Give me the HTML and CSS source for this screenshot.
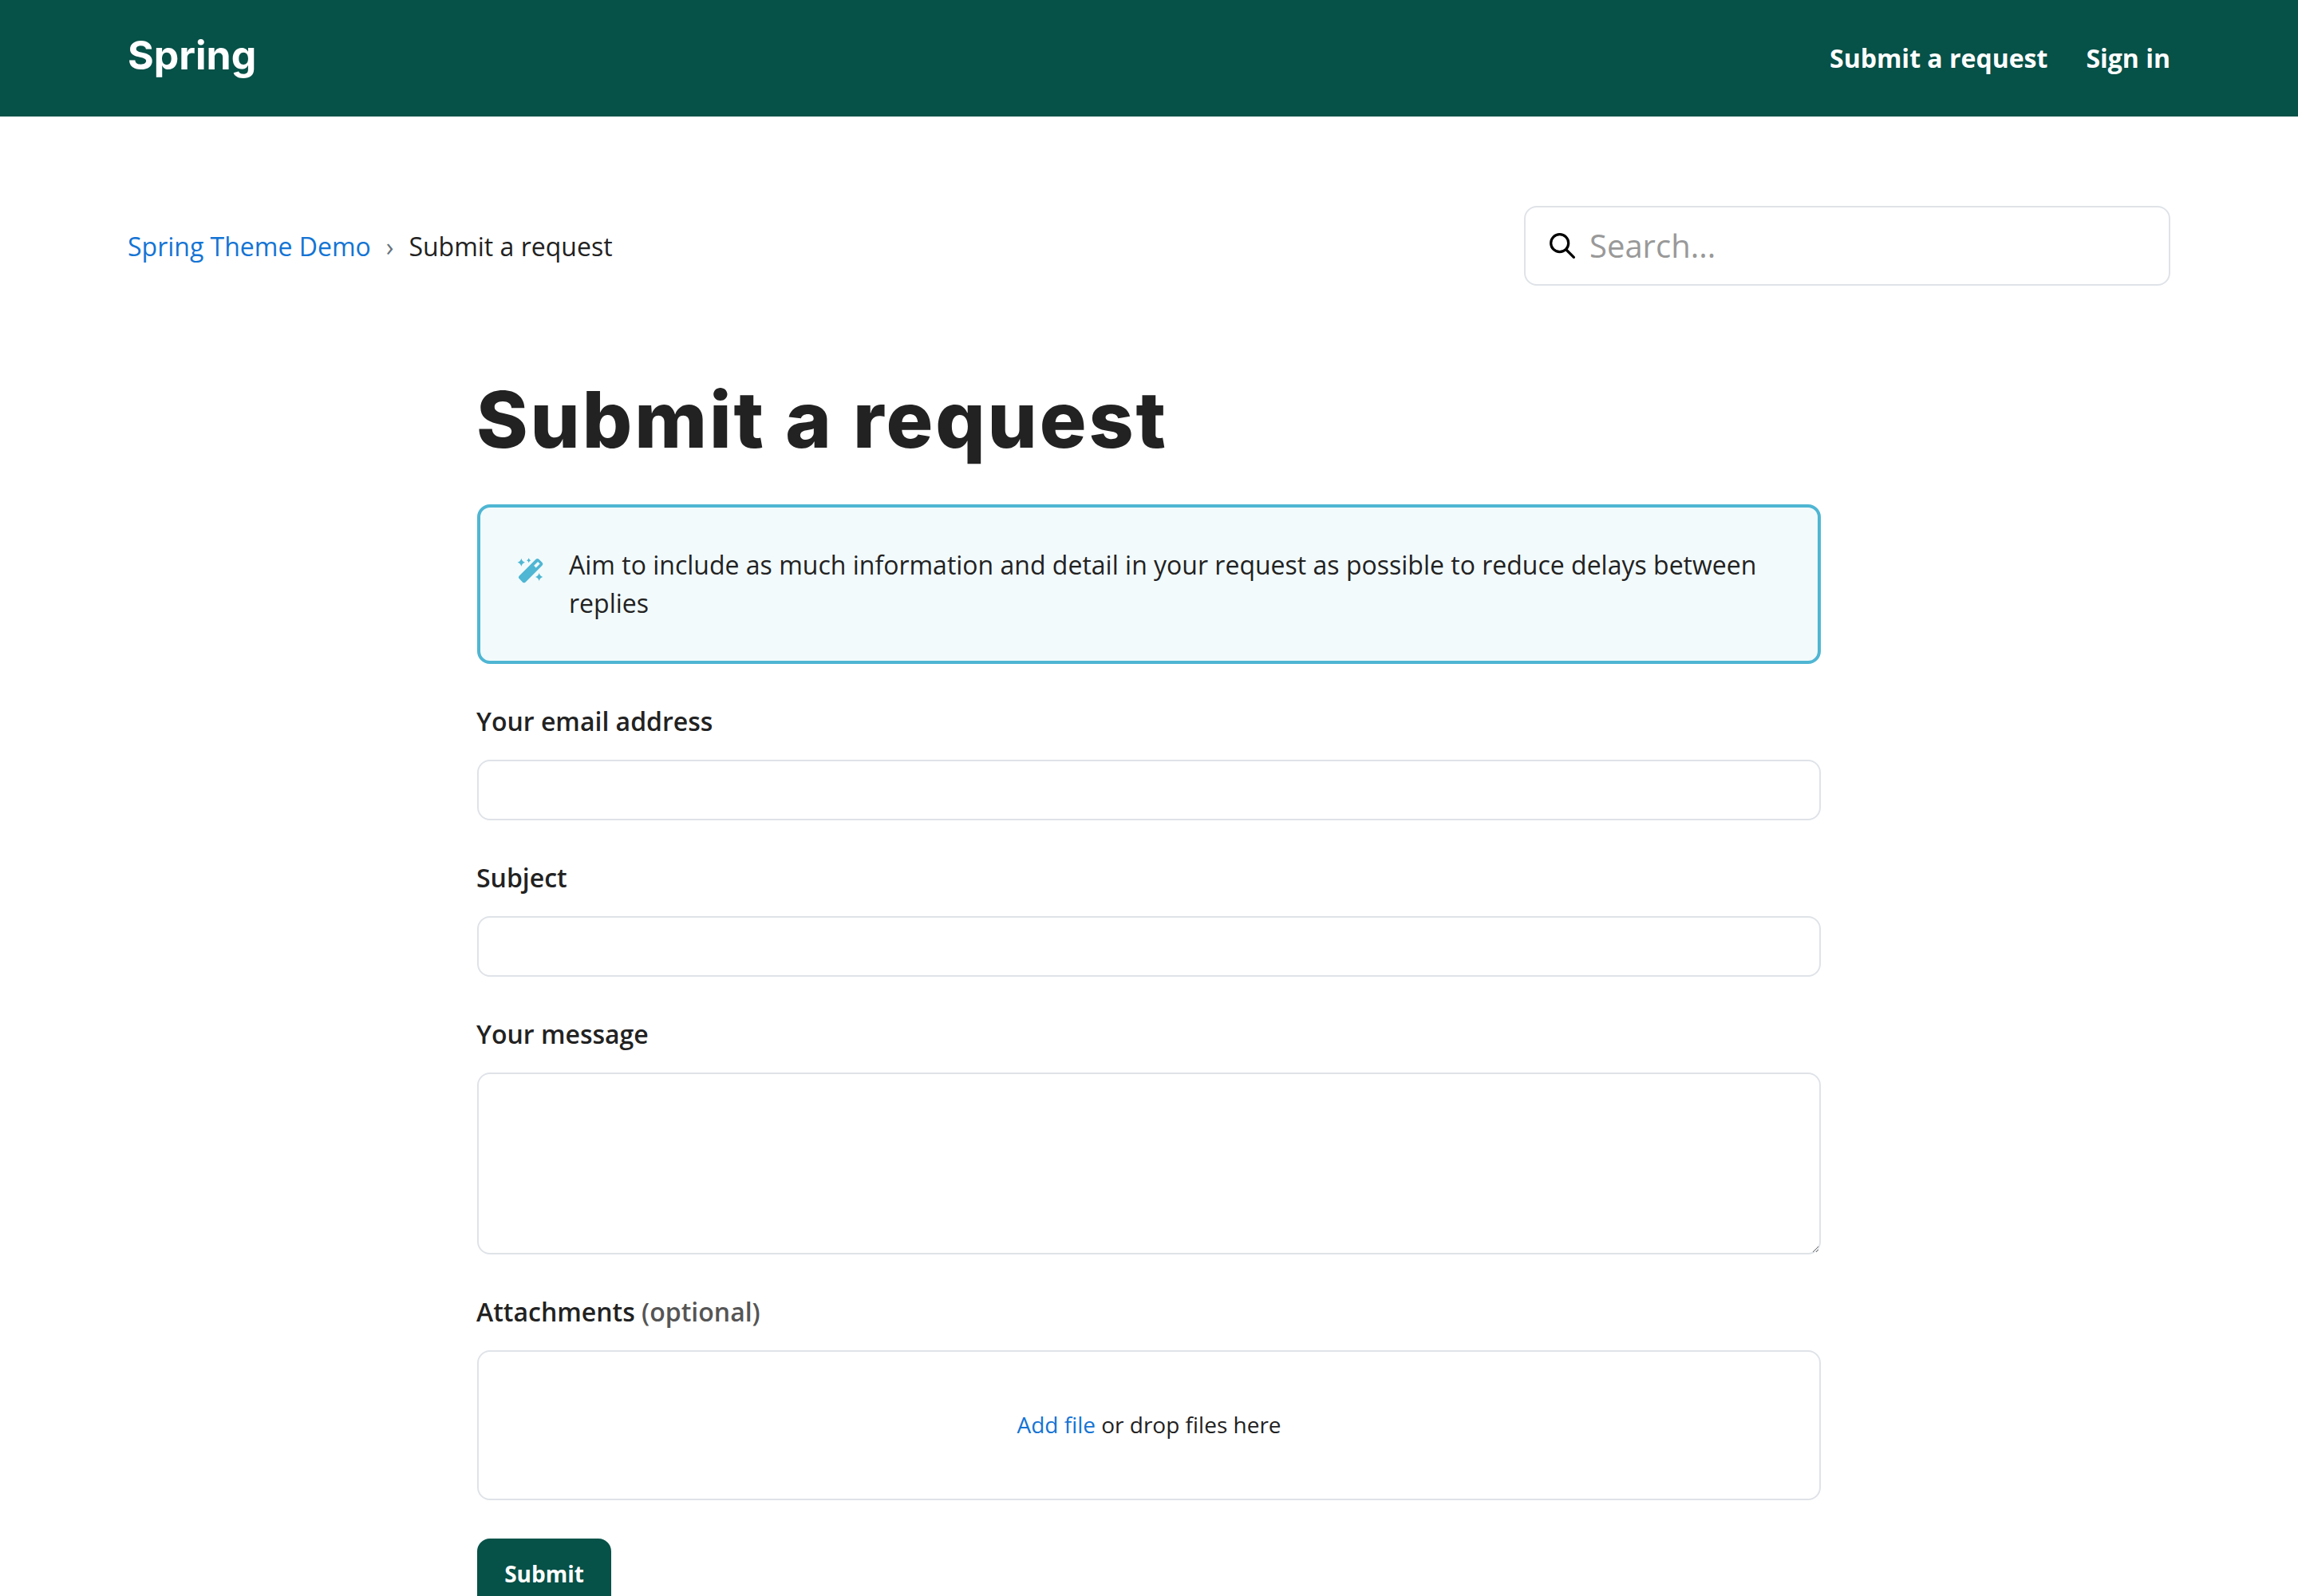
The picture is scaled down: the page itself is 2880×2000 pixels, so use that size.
FILE: index.html
```html
<!DOCTYPE html>
<html lang="en">
<head>
<meta charset="utf-8">
<title>Submit a request</title>
<link rel="stylesheet" href="styles.css">
</head>
<body>
<header class="site-header">
  <a class="logo" href="#">Spring</a>
  <nav class="site-nav">
    <a href="#">Submit a request</a>
    <a href="#">Sign in</a>
  </nav>
</header>
<main class="page">
  <div class="sub-nav">
    <ol class="breadcrumbs">
      <li><a href="#">Spring Theme Demo</a></li>
      <li class="sep">›</li>
      <li>Submit a request</li>
    </ol>
    <div class="search">
      <svg class="search-icon" viewBox="0 0 32 32" aria-hidden="true"><circle cx="12.7" cy="12.7" r="11" fill="none" stroke="#000" stroke-width="3.2"/><path d="M20.5 20.5L31.5 31.5" fill="none" stroke="#000" stroke-width="3.2"/></svg>
      <input class="search-input" type="text" placeholder="Search...">
    </div>
  </div>
  <section class="content">
    <h1 class="title">Submit a request</h1>
    <div class="notice">
      <svg class="notice-icon" viewBox="200 235 105 105" aria-hidden="true">
        <rect x="205" y="270" width="104" height="33" rx="8" transform="rotate(-45 257 286)" fill="#4fb6d3"/>
        <rect x="270" y="259" width="21" height="11" transform="rotate(-45 280 264)" fill="#f2fafc"/>
        <path d="M222 240q3 12 14 15q-11 3-14 15q-3-12-14-15q11-3 14-15z" fill="#4fb6d3"/>
        <path d="M250 239q2 7 8 9q-6 2-8 9q-2-7-8-9q6-2 8-9z" fill="#4fb6d3"/>
        <path d="M289 295q3 12 14 15q-11 3-14 15q-3-12-14-15q11-3 14-15z" fill="#4fb6d3"/>
      </svg>
      <p class="notice-text">Aim to include as much information and detail in your request as possible to reduce delays between replies</p>
    </div>
    <form class="form">
      <div class="field">
        <label class="label">Your email address</label>
        <input class="control" type="text">
      </div>
      <div class="field">
        <label class="label">Subject</label>
        <input class="control" type="text">
      </div>
      <div class="field">
        <label class="label">Your message</label>
        <textarea class="control control-area"></textarea>
      </div>
      <div class="field">
        <label class="label">Attachments <span class="optional">(optional)</span></label>
        <div class="dropzone"><a href="#">Add file</a>&nbsp;or drop files here</div>
      </div>
      <button class="submit" type="button">Submit</button>
    </form>
  </section>
</main>
</body>
</html>
```
FILE: styles.css
```css
* { box-sizing: border-box; }
html, body { margin: 0; padding: 0; }
body {
  font-family: "Open Sans", sans-serif;
  font-size: 32px;
  line-height: 48px;
  color: #222;
  background: #fff;
  height: 2000px;
  overflow: hidden;
}
a { color: #1474d4; text-decoration: none; }

.site-header {
  display: flex;
  align-items: center;
  justify-content: space-between;
  height: 146px;
  padding: 0 160px;
  background: #065148;
}
.logo {
  font-family: Inter, sans-serif;
  font-size: 50px;
  font-weight: 700;
  line-height: 60px;
  color: #fff;
  margin-top: -8px;
}
.site-nav { display: flex; gap: 48px; }
.site-nav a { color: #fff; font-weight: 700; }

.page { padding: 112px 160px 0; }
.sub-nav {
  display: flex;
  align-items: center;
  justify-content: space-between;
}
.breadcrumbs {
  display: flex;
  gap: 19px;
  list-style: none;
  margin: 1px 0 0;
  padding: 0;
}
.sep { color: #68737d; font-size: 32px; }

.search {
  display: flex;
  align-items: center;
  gap: 18px;
  width: 810px;
  height: 100px;
  padding: 0 30px;
  border: 2px solid #dfe3e8;
  border-radius: 16px;
}
.search-icon { width: 32px; height: 32px; flex: none; }
.search-input {
  flex: 1;
  min-width: 0;
  border: 0;
  outline: 0;
  padding: 0;
  font: 40px/56px "Open Sans", sans-serif;
  color: #222;
}
.search-input::placeholder { color: #999; opacity: 1; }

.content { width: 1684px; margin: 0 auto; padding-top: 112px; }
.title {
  margin: 0 0 0 -1px;
  font-family: Inter, sans-serif;
  font-size: 98px;
  font-weight: 800;
  letter-spacing: 2.9px;
  line-height: 112px;
  color: #222;
}
.notice {
  display: flex;
  align-items: flex-start;
  gap: 32px;
  margin-top: 50px;
  padding: 48px 48px 48px 44px;
  border: 4px solid #4fb6d3;
  border-radius: 16px;
  background: #f2fafc;
}
.notice-icon { width: 35px; height: 35px; flex: none; margin-top: 14px; }
.notice-text { margin: 0; }

.form { display: flex; flex-direction: column; align-items: flex-start; margin-top: 48px; }
.field { display: flex; flex-direction: column; width: 100%; margin-bottom: 48px; }
.label { font-weight: 600; margin: 0 0 24px -1px; color: #222; }
.optional { font-weight: 600; color: #555; }
.control {
  display: block;
  width: 100%;
  height: 76px;
  padding: 8px 20px;
  border: 2px solid #dfe3e8;
  border-radius: 16px;
  outline: 0;
  font: 32px/48px "Open Sans", sans-serif;
  background: #fff;
}
.control-area { height: 228px; resize: vertical; }
.dropzone {
  display: flex;
  align-items: center;
  justify-content: center;
  height: 188px;
  padding-bottom: 2px;
  border: 2px solid #dfe3e8;
  border-radius: 16px;
  font-size: 28px;
}
.submit {
  width: 168px;
  height: 88px;
  border: 0;
  border-radius: 16px;
  background: #065148;
  color: #fff;
  font: 700 28px/40px "Open Sans", sans-serif;
}
```
